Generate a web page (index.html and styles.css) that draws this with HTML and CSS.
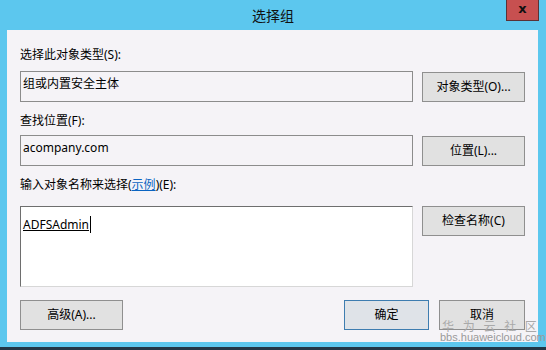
FILE: index.html
```html
<!DOCTYPE html>
<html lang="zh-CN">
<head>
    <meta charset="UTF-8">
    <title>选择组</title>
    <link rel="stylesheet" href="styles.css">
</head>
<body>
    <div class="window">
        <div class="titlebar">
            <span class="title">选择组</span>
            <span class="close">x</span>
        </div>

        <div class="client">
            <div class="label label-first">选择此对象类型(S):</div>
            <div class="field-row">
                <div class="box readonly">组或内置安全主体</div>
                <button class="btn btn-side">对象类型(O)...</button>
            </div>

            <div class="label">查找位置(F):</div>
            <div class="field-row">
                <div class="box readonly">acompany.com</div>
                <button class="btn btn-side">位置(L)...</button>
            </div>

            <div class="label label-third">输入对象名称来选择(<a href="#">示例</a>)(E):</div>
            <div class="field-row field-names">
                <div class="box names"><span class="resolved">ADFSAdmin</span><span class="caret"></span></div>
                <button class="btn btn-side btn-top">检查名称(C)</button>
            </div>

            <div class="footer">
                <button class="btn btn-advanced">高级(A)...</button>
                <div class="footer-right">
                    <button class="btn btn-ok">确定</button>
                    <button class="btn btn-cancel">取消</button>
                </div>
            </div>
        </div>

        <!-- водяной знак -->
        <div class="watermark">
            <div class="wm-cn">华 为 云 社 区</div>
            <div class="wm-url">bbs.huaweicloud.com</div>
        </div>
    </div>
</body>
</html>
```

FILE: styles.css
```css
body {
    margin: 0;
    padding: 0;
    font-family: "Noto Sans", "Noto Sans CJK SC", sans-serif;
    font-size: 12px;
    color: #000;
}
.window {
    position: relative;
    width: 546px;
    height: 347px;
    background: #5cc7ee;
    border-bottom: 3px solid #223646;
    display: flex;
    flex-direction: column;
}
.titlebar {
    position: relative;
    height: 30px;
    display: flex;
    align-items: center;
    justify-content: center;
}
.title {
    font-family: "Noto Sans CJK SC", sans-serif;
    font-size: 14px;
    color: #111;
}
.close {
    position: absolute;
    top: 0;
    left: 506px;
    width: 31px;
    height: 20px;
    background: #c75050;
    border: 1px solid #5a3236;
    border-top: none;
    color: #111;
    font-family: "DejaVu Sans", sans-serif;
    font-weight: bold;
    font-size: 13px;
    line-height: 17px;
    text-align: center;
}
.client {
    margin: 0 8px 0 7px;
    height: 312px;
    box-sizing: border-box;
    padding: 16px 13px 0 13px;
    background: #f5f3f7;
    display: flex;
    flex-direction: column;
}
.label {
    height: 18px;
    line-height: 18px;
    margin: 10px 0 5px 0;
    white-space: nowrap;
}
.label-first {
    margin: 0 0 7px 0;
}
.label-third {
    margin-bottom: 12px;
}
.label a {
    color: #0a64c2;
    text-decoration: underline;
}
.field-row {
    display: flex;
    align-items: flex-start;
    gap: 9px;
}
.box {
    flex: 1;
    height: 31px;
    box-sizing: border-box;
    padding: 3px 2px;
    line-height: 18px;
    border: 1px solid #8c8c8c;
}
.readonly {
    background: #f5f3f7;
}
.names {
    height: 81px;
    background: #fff;
    padding: 9px 2px;
    border-color: #6e6e6e #d7d7d7 #d7d7d7 #6e6e6e;
    display: flex;
    align-items: flex-start;
}
.resolved {
    text-decoration: underline;
}
.caret {
    display: inline-block;
    width: 1px;
    height: 17px;
    margin-left: 1px;
    background: #000;
}
.btn {
    font-family: "Noto Sans", "Noto Sans CJK SC", sans-serif;
    font-size: 12px;
    line-height: 12px;
    color: #000;
    height: 30px;
    padding: 0;
    background: #e1e1e1;
    border: 1px solid #8f8f8f;
    border-radius: 0;
}
.btn-side {
    width: 103px;
    margin-top: 1px;
}
.btn-top {
    margin-top: 0;
}
.footer {
    margin-top: 13px;
    display: flex;
    align-items: center;
}
.btn-advanced {
    width: 103px;
}
.footer-right {
    margin-left: auto;
    display: flex;
    gap: 10px;
}
.btn-ok {
    width: 85px;
    background: #dfe3e8;
    border-color: #3e7db0;
}
.btn-cancel {
    width: 86px;
}
.watermark {
    position: absolute;
    left: 440px;
    top: 320px;
    width: 102px;
    color: #a9a9a9;
    text-align: center;
}
.wm-cn {
    font-family: "Noto Sans CJK SC", sans-serif;
    font-size: 12px;
    line-height: 11px;
    letter-spacing: 3px;
}
.wm-url {
    margin-top: 1px;
    font-family: "Liberation Sans", sans-serif;
    font-size: 11px;
    line-height: 10px;
    color: #9a9a9a;
}
```
